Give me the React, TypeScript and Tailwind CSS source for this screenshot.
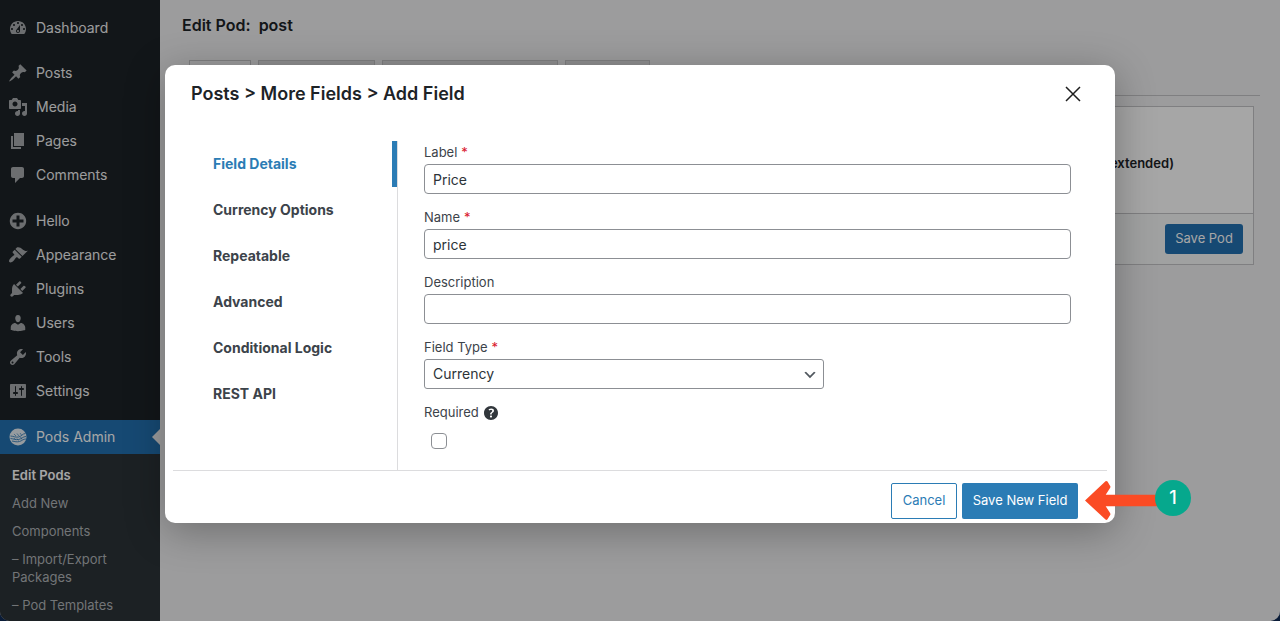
import React, { useState } from 'react';

type IconName =
  | 'dashboard'
  | 'post'
  | 'media'
  | 'page'
  | 'comments'
  | 'plus'
  | 'appearance'
  | 'plugins'
  | 'users'
  | 'tools'
  | 'settings'
  | 'help';

const ICON_PATHS: Record<IconName, string> = {
  dashboard:
    'M3.76 16h12.48c1.1-1.37 1.76-3.11 1.76-5 0-4.42-3.58-8-8-8s-8 3.58-8 8c0 1.89.66 3.63 1.76 5zM10 4c.55 0 1 .45 1 1s-.45 1-1 1-1-.45-1-1 .45-1 1-1zM6 6c.55 0 1 .45 1 1s-.45 1-1 1-1-.45-1-1 .45-1 1-1zm8 0c.55 0 1 .45 1 1s-.45 1-1 1-1-.45-1-1 .45-1 1-1zm-5.37 5.55L12 7v6c0 1.1-.9 2-2 2s-2-.9-2-2c0-.57.24-1.08.63-1.45zM4 10c.55 0 1 .45 1 1s-.45 1-1 1-1-.45-1-1 .45-1 1-1zm12 0c.55 0 1 .45 1 1s-.45 1-1 1-1-.45-1-1 .45-1 1-1zm-5 3c0-.55-.45-1-1-1s-1 .45-1 1 .45 1 1 1 1-.45 1-1z',
  post: 'M10.44 3.02l1.82-1.82 6.36 6.35-1.83 1.82c-1.05-.68-2.48-.57-3.41.36l-.75.75c-.92.93-1.04 2.35-.35 3.41l-1.83 1.82-2.41-2.41-2.8 2.79c-.42.42-3.38 2.71-3.8 2.29s1.86-3.39 2.28-3.81l2.79-2.79L4.1 9.36l1.83-1.82c1.05.69 2.48.57 3.4-.36l.75-.75c.93-.92 1.05-2.35.36-3.41z',
  media:
    'M13 11V4c0-.55-.45-1-1-1h-1.67L9 1H5L3.67 3H2c-.55 0-1 .45-1 1v7c0 .55.45 1 1 1h10c.55 0 1-.45 1-1zM7 4.5c1.38 0 2.5 1.12 2.5 2.5S8.38 9.5 7 9.5 4.5 8.38 4.5 7 5.62 4.5 7 4.5zM14 6h5v10.5c0 1.38-1.12 2.5-2.5 2.5S14 17.88 14 16.5s1.12-2.5 2.5-2.5c.17 0 .34.02.5.05V9h-3V6zm-4 8.05V13h2v3.5c0 1.38-1.12 2.5-2.5 2.5S7 17.88 7 16.5 8.12 14 9.5 14c.17 0 .34.02.5.05z',
  page: 'M6 15V2h10v13H6zm-1 1h8v2H3V5h2v11z',
  comments:
    'M5 2h9c1.1 0 2 .9 2 2v7c0 1.1-.9 2-2 2h-2l-5 5v-5H5c-1.1 0-2-.9-2-2V4c0-1.1.9-2 2-2z',
  plus: 'M15.8 4.2c3.2 3.21 3.2 8.39 0 11.6-3.21 3.2-8.39 3.2-11.6 0C1 12.59 1 7.41 4.2 4.2 7.41 1 12.59 1 15.8 4.2zm-4.3 11.3v-4h4v-3h-4v-4h-3v4h-4v3h4v4h3z',
  appearance:
    'M14.48 11.06L7.41 3.99l1.5-1.5c.5-.56 2.3-.47 3.51.32 1.21.8 1.43 1.28 2.91 2.1 1.18.64 2.45 1.26 4.45.85zm-.71.71L6.7 4.7 4.93 6.47c-.39.39-.39 1.02 0 1.41l1.06 1.06c.39.39.39 1.03 0 1.42-.6.6-1.43 1.11-2.21 1.69-.35.26-.7.53-1.01.84C1.43 14.23.4 16.08 1.4 17.07c.99 1 2.84-.03 4.18-1.36.31-.31.58-.66.85-1.02.57-.78 1.08-1.61 1.69-2.21.39-.39 1.02-.39 1.41 0l1.06 1.06c.39.39 1.02.39 1.41 0z',
  plugins:
    'M13.11 4.36L9.87 7.6 8 5.73l3.24-3.24c.35-.34 1.05-.2 1.56.32.52.51.66 1.21.31 1.55zm-8 1.77l.91-1.12 9.01 9.01-1.19.84c-.71.71-2.63 1.16-3.82 1.16H6.14L4.9 17.26c-.59.59-1.54.59-2.12 0-.59-.58-.59-1.53 0-2.12l1.24-1.24v-3.88c0-1.13.4-3.19 1.09-3.89zm7.26 3.97l3.24-3.24c.34-.35 1.04-.21 1.55.31.52.51.66 1.21.31 1.55l-3.24 3.25z',
  users:
    'M10 9.25c-2.27 0-2.73-3.44-2.73-3.44C7 4.02 7.82 2 9.97 2c2.16 0 2.98 2.02 2.71 3.81 0 0-.41 3.44-2.68 3.44zm0 2.57L12.72 10c2.39 0 4.52 2.33 4.52 4.53v2.49s-3.65 1.13-7.24 1.13c-3.65 0-7.24-1.13-7.24-1.13v-2.49c0-2.25 1.94-4.48 4.47-4.48z',
  tools:
    'M16.68 9.77c-1.34 1.34-3.3 1.67-4.95.99l-5.41 6.52c-.99.99-2.59.99-3.58 0s-.99-2.59 0-3.57l6.52-5.42c-.68-1.65-.35-3.61.99-4.95 1.28-1.28 3.12-1.62 4.72-1.06l-2.89 2.89 2.82 2.82 2.86-2.87c.53 1.58.18 3.39-1.08 4.65zM3.81 16.21c.4.39 1.04.39 1.43 0 .4-.4.4-1.04 0-1.43-.39-.4-1.03-.4-1.43 0-.39.39-.39 1.03 0 1.43z',
  settings:
    'M18 16V4c0-.55-.45-1-1-1H3c-.55 0-1 .45-1 1v12c0 .55.45 1 1 1h14c.55 0 1-.45 1-1zM8 11h1c.55 0 1 .45 1 1s-.45 1-1 1H8v1.5c0 .28-.22.5-.5.5s-.5-.22-.5-.5V13H6c-.55 0-1-.45-1-1s.45-1 1-1h1V5.5c0-.28.22-.5.5-.5s.5.22.5.5V11zm5-2h-1c-.55 0-1-.45-1-1s.45-1 1-1h1V5.5c0-.28.22-.5.5-.5s.5.22.5.5V7h1c.55 0 1 .45 1 1s-.45 1-1 1h-1v5.5c0 .28-.22.5-.5.5s-.5-.22-.5-.5V9z',
  help: 'M17 10c0-3.87-3.14-7-7-7-3.87 0-7 3.13-7 7s3.13 7 7 7c3.86 0 7-3.13 7-7zm-6.3 1.48H9.14v-.43c0-.38.08-.7.24-.98s.46-.57.88-.89c.41-.29.68-.53.81-.71.14-.18.2-.39.2-.62 0-.25-.09-.44-.28-.58-.19-.13-.45-.19-.79-.19-.58 0-1.25.15-2 .46l-.64-1.28c.87-.49 1.8-.74 2.77-.74.81 0 1.45.2 1.92.58.48.39.71.91.71 1.55 0 .43-.09.8-.29 1.11-.19.32-.57.67-1.11 1.06-.38.28-.61.49-.71.63-.1.15-.15.34-.15.57v.46zm-1.47 2.74c-.18-.17-.27-.42-.27-.73 0-.33.08-.58.26-.75s.43-.25.77-.25c.32 0 .57.09.75.26s.27.42.27.74c0 .3-.09.55-.27.72-.18.18-.43.27-.75.27-.33 0-.58-.09-.76-.26z',
};

const Icon = ({ name, className }: { name: IconName; className: string }) => (
  <svg viewBox="0 0 20 20" className={className} aria-hidden="true">
    <path d={ICON_PATHS[name]} fill="currentColor" fillRule="evenodd" />
  </svg>
);

const PodsLogo = () => (
  <svg viewBox="0 0 20 20" className="size-5 shrink-0" aria-hidden="true">
    <circle cx="10" cy="10" r="8.500" fill="#e6eef4" />
    <g fill="none" stroke="#2271b1" strokeWidth=".8">
      <path d="M2.500 9c3 .3 5 1.500 8 1s4-3.500 7-3.500" />
      <path d="M2.500 11.500c3 .3 5 1.500 8 1s4.500-3 7.500-3" />
      <path d="M4 14c3 .6 5 1.200 7.500.5s3.500-2.500 6.500-2.500" />
      <path
        d="M6 7l2 2M9 6.500l2 2.500M12 6l1.500 2M6 11l1.500 2M9 11.500l1.500 2M12.500 10l1.500 2.500"
        strokeWidth=".6"
      />
    </g>
  </svg>
);

const menuGroups: { label: string; icon: IconName }[][] = [
  [{ label: 'Dashboard', icon: 'dashboard' }],
  [
    { label: 'Posts', icon: 'post' },
    { label: 'Media', icon: 'media' },
    { label: 'Pages', icon: 'page' },
    { label: 'Comments', icon: 'comments' },
  ],
  [
    { label: 'Hello', icon: 'plus' },
    { label: 'Appearance', icon: 'appearance' },
    { label: 'Plugins', icon: 'plugins' },
    { label: 'Users', icon: 'users' },
    { label: 'Tools', icon: 'tools' },
    { label: 'Settings', icon: 'settings' },
  ],
];

const submenu = [
  'Edit Pods',
  'Add New',
  'Components',
  '– Import/Export Packages',
  '– Pod Templates',
];

const sections = [
  'Field Details',
  'Currency Options',
  'Repeatable',
  'Advanced',
  'Conditional Logic',
  'REST API',
];

const Sidebar = () => (
  <nav className="w-40 shrink-0 bg-[#1d2327] pt-[11px] text-sm text-[#f0f0f1]">
    {menuGroups.map((group, index) => (
      <ul key={index} className="mb-3 first-of-type:mb-[11px]">
        {group.map(({ label, icon }) => (
          <li key={label}>
            <a href="#" className="flex h-[34px] items-center gap-2 px-2">
              <Icon name={icon} className="size-5 shrink-0 text-[#a7aaad]" />
              {label}
            </a>
          </li>
        ))}
      </ul>
    ))}
    <a
      href="#"
      className="relative flex h-[34px] items-center gap-2 bg-[#2271b1] px-2 text-white"
    >
      <PodsLogo />
      Pods Admin
      <span className="absolute top-[9px] right-0 border-y-8 border-r-8 border-y-transparent border-r-[#f0f0f1]" />
    </a>
    <div className="bg-[#2c3338] pt-[7px] pb-3 text-[13px] leading-[18px]">
      {submenu.map((label, index) => (
        <a
          key={label}
          href="#"
          className={`block px-3 py-[5px] ${
            index === 0 ? 'font-semibold text-white' : 'text-[#b0b4b7]'
          }`}
        >
          {label}
        </a>
      ))}
    </div>
  </nav>
);

const EditPod = () => (
  <main className="min-w-0 flex-1 pt-3 pr-5 pl-[22px]">
    <h1 className="text-base leading-[26px] font-semibold whitespace-pre text-[#1d2327]">
      Edit Pod:  post
    </h1>
    <div className="mt-[22px] flex h-9 gap-[7px] border-b border-[#c3c4c7] pl-[7px]">
      <span className="w-[62px] border border-b-0 border-[#c3c4c7] bg-[#f0f0f1]" />
      <span className="w-[117px] border border-b-0 border-[#c3c4c7] bg-[#dcdcde]" />
      <span className="w-[176px] border border-b-0 border-[#c3c4c7] bg-[#dcdcde]" />
      <span className="w-[85px] border border-b-0 border-[#c3c4c7] bg-[#dcdcde]" />
    </div>
    <aside className="mt-[10px] mr-[6px] ml-auto w-[280px] border border-[#c3c4c7] bg-white">
      <p className="flex h-[107px] items-center justify-end border-b border-[#c3c4c7] pt-2 pr-[79px] text-[13px] font-semibold text-[#1d2327]">
        (extended)
      </p>
      <div className="flex justify-end bg-[#f6f7f7] p-[10px]">
        <button
          type="button"
          className="h-[30px] w-[78px] rounded-[3px] bg-[#2271b1] text-[13px] text-white"
        >
          Save Pod
        </button>
      </div>
    </aside>
  </main>
);

type FieldProps = {
  id: string;
  label: string;
  required?: boolean;
  help?: boolean;
  children: React.ReactNode;
};

const Field = ({ id, label, required, help, children }: FieldProps) => (
  <div>
    <label
      htmlFor={id}
      className="mb-[2px] flex h-[18px] items-center gap-1 text-[13px] text-[#3c434a]"
    >
      {label}
      {required && <span className="text-[#d9162b]">*</span>}
      {help && <Icon name="help" className="-ml-0.5 size-5 text-[#32373c]" />}
    </label>
    {children}
  </div>
);

const INPUT_CLASSES =
  'block h-[30px] w-full rounded border border-[#8c8f94] bg-white px-2 text-sm text-[#2c3338]';

const StepPointer = () => (
  <div className="absolute right-[-76px] bottom-[3px] flex items-center">
    <svg viewBox="0 0 76 40" className="-mr-1.5 h-10 w-19" aria-hidden="true">
      <path
        d="M0 20.500 20.500 1.200q1-.8 2 .4l2.800 4.600q.4 1-.4 2l-4.200 6.600H76v11.400H20.700l4.200 6.600q.8 1 .4 2l-2.800 4.400q-1 1.200-2 .4z"
        fill="#fb4b24"
      />
    </svg>
    <span className="z-10 mb-1 flex size-9 items-center justify-center rounded-full bg-[#06a88d] text-lg font-medium text-white">
      1
    </span>
  </div>
);

const AddFieldDialog = () => {
  const [label, setLabel] = useState('Price');
  const [name, setName] = useState('price');
  const [description, setDescription] = useState('');

  return (
    <div
      role="dialog"
      aria-labelledby="dialog-title"
      className="relative w-full max-w-[950px] rounded-[10px] bg-white shadow-[0_8px_40px_rgba(0,0,0,0.3)]"
    >
      <header className="flex h-[58px] items-center justify-between pr-[30px] pl-[26px]">
        <h2 id="dialog-title" className="text-lg font-semibold text-[#1d2327]">
          Posts &gt; More Fields &gt; Add Field
        </h2>
        <button
          type="button"
          aria-label="Close"
          className="flex size-6 items-center justify-center text-[#1e1e1e]"
        >
          <svg viewBox="0 0 16 16" className="size-4" aria-hidden="true">
            <path
              d="M1 1l14 14M15 1 1 15"
              fill="none"
              stroke="currentColor"
              strokeWidth="1.500"
            />
          </svg>
        </button>
      </header>

      <div className="mx-2 flex border-b border-[#dcdcde] pt-[18px]">
        <nav className="w-[225px] shrink-0 border-r border-[#dcdcde] text-sm font-bold text-[#3c434a]">
          {sections.map((section, index) => (
            <a
              key={section}
              href="#"
              className={`flex h-[46px] items-center pl-10 ${
                index === 0 ? 'border-r-5 border-[#2b7cb5] text-[#2b7cb5]' : ''
              }`}
            >
              {section}
            </a>
          ))}
        </nav>
        <form
          id="add-field"
          className="flex flex-1 flex-col gap-[15px] pt-[3px] pr-9 pb-[21px] pl-[26px]"
        >
          <Field id="label" label="Label" required>
            <input
              id="label"
              value={label}
              onChange={(e) => setLabel(e.target.value)}
              className={INPUT_CLASSES}
            />
          </Field>
          <Field id="name" label="Name" required>
            <input
              id="name"
              value={name}
              onChange={(e) => setName(e.target.value)}
              className={INPUT_CLASSES}
            />
          </Field>
          <Field id="description" label="Description">
            <input
              id="description"
              value={description}
              onChange={(e) => setDescription(e.target.value)}
              className={INPUT_CLASSES}
            />
          </Field>
          <Field id="type" label="Field Type" required>
            <div className="relative max-w-[400px]">
              <select
                id="type"
                className="block h-[30px] w-full appearance-none rounded-[3px] border border-[#8c8f94] bg-white px-2 text-sm text-[#2c3338]"
              >
                <option>Currency</option>
              </select>
              <svg
                viewBox="0 0 20 20"
                className="pointer-events-none absolute top-2 right-1.5 size-4 text-[#50575e]"
                aria-hidden="true"
              >
                <path d="M5 6l5 5 5-5 2 1-7 7-7-7 2-1z" fill="currentColor" />
              </svg>
            </div>
          </Field>
          <Field id="required" label="Required" help>
            <div className="flex pt-[9px] pl-[7px]">
              <input
                id="required"
                type="checkbox"
                className="size-4 appearance-none rounded border border-[#8c8f94] bg-white"
              />
            </div>
          </Field>
        </form>
      </div>

      <footer className="flex justify-end gap-[5px] pt-3 pr-[37px] pb-1 text-[13px]">
        <button
          type="button"
          className="h-9 w-[66px] rounded-xs border border-[#2b7cb5] bg-white text-[#2b7cb5]"
        >
          Cancel
        </button>
        <button
          type="submit"
          form="add-field"
          className="h-9 w-[116px] rounded-xs bg-[#2b7cb5] text-white"
        >
          Save New Field
        </button>
      </footer>

      <StepPointer />
    </div>
  );
};

const App = () => (
  <div className="h-screen bg-[#0a1c38] font-[Inter,sans-serif]">
    <div className="relative flex h-full overflow-hidden rounded-b-[10px] bg-[#f0f0f1]">
      <Sidebar />
      <EditPod />
      <div className="absolute inset-0 flex items-start justify-center bg-black/35 pt-[65px]">
        <AddFieldDialog />
      </div>
    </div>
  </div>
);

export default App;
